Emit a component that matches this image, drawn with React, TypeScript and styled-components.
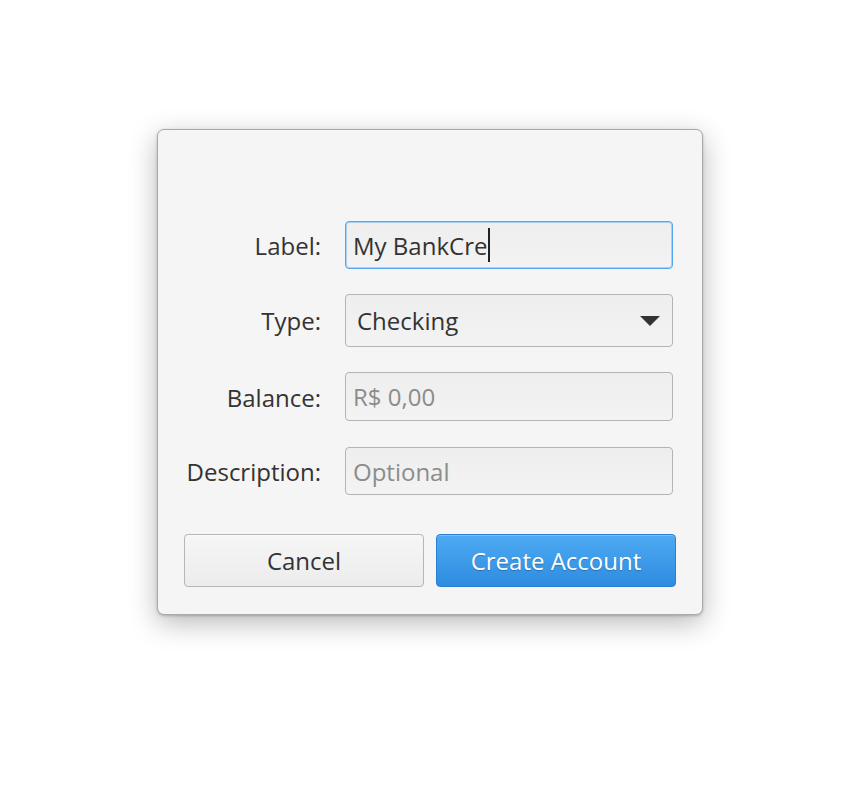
import styled, { createGlobalStyle } from "styled-components";

const GlobalStyle = createGlobalStyle`
  html, body {
    margin: 0;
    padding: 0;
    background: #ffffff;
  }
  body {
    font-family: "Open Sans", "Noto Sans", sans-serif;
  }
`;

const Page = styled.div`
  display: flex;
  justify-content: center;
  padding-top: 129px;
  height: 800px;
  box-sizing: border-box;
`;

const Dialog = styled.div`
  width: 546px;
  height: 486px;
  box-sizing: border-box;
  background: #f5f5f5;
  border: 1px solid #aaaaaa;
  border-radius: 7px;
  box-shadow: 0 8px 28px rgba(0, 0, 0, 0.28), 0 1px 3px rgba(0, 0, 0, 0.22);
  padding: 91px 26px 0 26px;
  display: flex;
  flex-direction: column;
`;

const Form = styled.div`
  display: grid;
  grid-template-columns: 1fr 328px;
  grid-template-rows: 48px 53px 50px 48px;
  row-gap: 25px;
  column-gap: 24px;
  margin-right: 3px;
  align-items: center;
`;

const Label = styled.label`
  text-align: right;
  font-size: 24px;
  color: #333333;
  white-space: nowrap;
`;

const Field = styled.div<{ $focused?: boolean; $offset?: number }>`
  height: 100%;
  box-sizing: border-box;
  border: 1px solid ${(p) => (p.$focused ? "#52a9f2" : "#b4b4b4")};
  box-shadow: ${(p) =>
    p.$focused ? "inset 0 0 0 1px rgba(120, 186, 242, 0.6)" : "none"};
  border-radius: 4px;
  background: linear-gradient(#eeeeee, #f3f3f3);
  display: flex;
  align-items: center;
  padding: 0 7px;
  font-size: 24px;
  color: #333333;
`;

const Placeholder = styled.span`
  color: #8c8c8c;
`;

const Caret = styled.span`
  display: inline-block;
  width: 2px;
  height: 34px;
  background: #222;
  margin-left: 1px;
`;

const SelectText = styled.span`
  flex: 1;
  padding-left: 4px;
`;

const Arrow = styled.svg`
  margin-right: 5px;
`;

const Buttons = styled.div`
  display: grid;
  grid-template-columns: 1fr 1fr;
  column-gap: 12px;
  margin-top: 39px;
`;

const Button = styled.button<{ $primary?: boolean }>`
  height: 53px;
  font-family: "Open Sans", "Noto Sans", sans-serif;
  font-size: 24px;
  border-radius: 4px;
  border: 1px solid ${(p) => (p.$primary ? "#2b7fd2" : "#b6b6b6")};
  background: ${(p) =>
    p.$primary
      ? "linear-gradient(#4eaaf2, #2e8ce0)"
      : "linear-gradient(#f6f6f6, #ececec)"};
  color: ${(p) => (p.$primary ? "#ffffff" : "#333333")};
  text-shadow: ${(p) => (p.$primary ? "0 1px 1px rgba(0,0,0,0.25)" : "none")};
  box-shadow: ${(p) =>
    p.$primary ? "inset 0 1px 0 rgba(255,255,255,0.25)" : "inset 0 1px 0 #fafafa"};
  padding: 0;
`;

const BalanceField = styled(Field)`
  height: 49px;
  align-self: start;
`;

export default function App() {
  return (
    <>
      <GlobalStyle />
      <Page>
        <Dialog>
          <Form>
            <Label>Label:</Label>
            <Field $focused>
              My BankCre
              <Caret />
            </Field>
            <Label>Type:</Label>
            <Field>
              <SelectText>Checking</SelectText>
              <Arrow width="20" height="10" viewBox="0 0 20 10">
                <path d="M0 0 H20 L10 10 Z" fill="#333333" />
              </Arrow>
            </Field>
            <Label>Balance:</Label>
            <BalanceField>
              <Placeholder>R$ 0,00</Placeholder>
            </BalanceField>
            <Label>Description:</Label>
            <Field>
              <Placeholder>Optional</Placeholder>
            </Field>
          </Form>
          <Buttons>
            <Button>Cancel</Button>
            <Button $primary>Create Account</Button>
          </Buttons>
        </Dialog>
      </Page>
    </>
  );
}
